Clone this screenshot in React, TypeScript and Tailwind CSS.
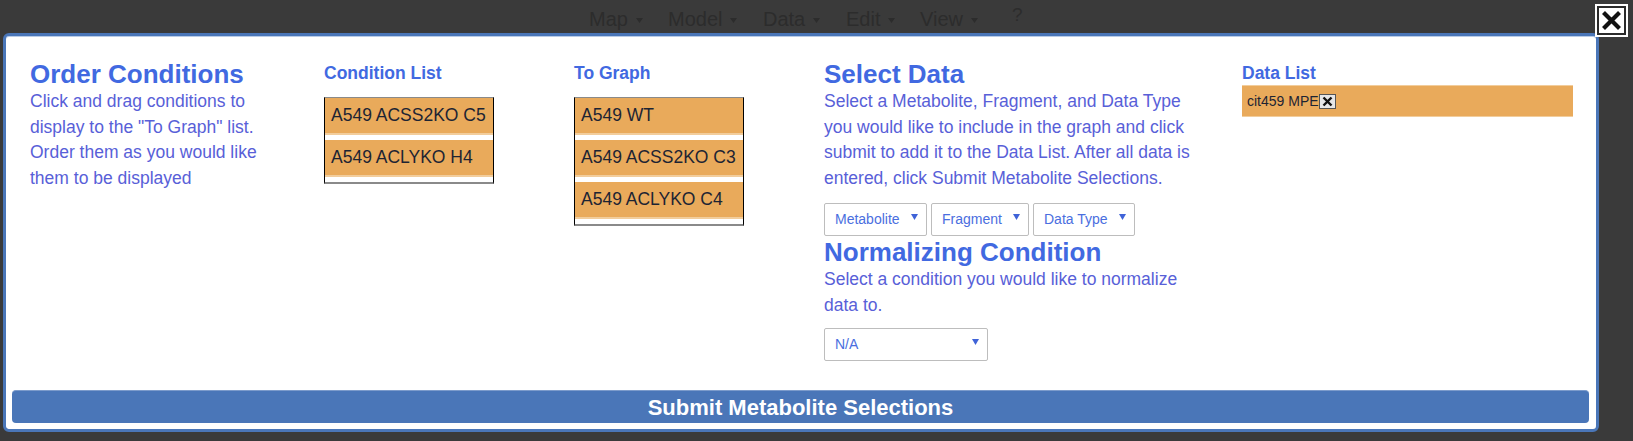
import React from 'react';

const menu = [
  { label: 'Map', width: 'w-[79px]' },
  { label: 'Model', width: 'w-[95px]' },
  { label: 'Data', width: 'w-[83px]' },
  { label: 'Edit', width: 'w-[74px]' },
  { label: 'View', width: 'w-[92px]' },
];

function Caret({ color = '#2c2c2c', w = 7, h = 5 }: { color?: string; w?: number; h?: number }) {
  return (
    <svg width={w} height={h} viewBox={`0 0 ${w} ${h}`} className="inline-block">
      <path d={`M0 0 L${w} 0 L${w / 2} ${h} Z`} fill={color} />
    </svg>
  );
}

function ListItem({ text }: { text: string }) {
  return (
    <div className="h-[37px] mb-[5px] bg-[#e9aa5b] border-b-2 border-[#f2cd9c] pl-[6px] flex items-center text-[17.5px] text-[#1d2433]">
      {text}
    </div>
  );
}

function ConditionBox({ items }: { items: string[] }) {
  return (
    <div className="w-[170px] border-x border-x-black border-t border-t-[#8a8a8a] border-b-2 border-b-[#8a8a8a] bg-white">
      {items.map((t) => (
        <ListItem key={t} text={t} />
      ))}
    </div>
  );
}

function Dropdown({ label, width }: { label: string; width: string }) {
  return (
    <div
      className={`${width} h-[33px] border border-[#bdbdbd] rounded-[2px] bg-white flex items-center justify-between pl-[10px] pr-[8px] text-[14px] text-[#4a6ee0]`}
    >
      <span>{label}</span>
      <span className="-mt-[5px] flex">
        <Caret color="#3f63d8" w={7} h={6} />
      </span>
    </div>
  );
}

function SmallX() {
  return (
    <span className="inline-flex w-[17px] h-[15px] border border-[#555] bg-[#e6e6e6] items-center justify-center">
      <svg width="11" height="11" viewBox="0 0 11 11">
        <path d="M1.5 1.5 L9.5 9.5 M9.5 1.5 L1.5 9.5" stroke="#111" strokeWidth="2.4" />
      </svg>
    </span>
  );
}

const bodyText = 'text-[17.5px] leading-[25.7px] text-[#5860d8] whitespace-nowrap';
const title = 'text-[26px] leading-[30px] font-bold text-[#4169e1] whitespace-nowrap';
const heading = 'text-[17.5px] leading-[20px] font-bold text-[#4169e1]';

export default function App() {
  return (
    <div className="relative w-[1633px] h-[441px] overflow-hidden bg-[#3a3a3a] font-['Liberation_Sans',Arial,sans-serif]">
      {/* Navbar behind the overlay */}
      <nav className="h-[33px] flex items-start pt-[7px] pl-[589px] text-[20px] leading-[24px] text-[#2c2c2c]">
        {menu.map((m) => (
          <span key={m.label} className={`${m.width} flex items-center gap-[8px]`}>
            {m.label}
            <span className="mt-[3px] flex">
              <Caret />
            </span>
          </span>
        ))}
        <span className="-mt-[4px] text-[19px]">?</span>
      </nav>

      {/* Modal */}
      <div className="ml-[3px] w-[1596px] h-[399px] border-[3px] border-[#4a76b8] rounded-[6px] bg-white flex flex-col shadow-[inset_0_1px_0_#b9cbe6]">
        <div className="flex pt-[23px] pl-[24px]">
          {/* Order Conditions */}
          <div className="w-[294px]">
            <h2 className={title}>Order Conditions</h2>
            <p className={bodyText}>
              Click and drag conditions to
              <br />
              display to the "To Graph" list.
              <br />
              Order them as you would like
              <br />
              them to be displayed
            </p>
          </div>

          {/* Condition List */}
          <div className="w-[250px] pt-[4px]">
            <h4 className={heading}>Condition List</h4>
            <div className="mt-[14px]">
              <ConditionBox items={['A549 ACSS2KO C5', 'A549 ACLYKO H4']} />
            </div>
          </div>

          {/* To Graph */}
          <div className="w-[250px] pt-[4px]">
            <h4 className={heading}>To Graph</h4>
            <div className="mt-[14px]">
              <ConditionBox items={['A549 WT', 'A549 ACSS2KO C3', 'A549 ACLYKO C4']} />
            </div>
          </div>

          {/* Select Data */}
          <div className="w-[418px]">
            <h2 className={title}>Select Data</h2>
            <p className={bodyText}>
              Select a Metabolite, Fragment, and Data Type
              <br />
              you would like to include in the graph and click
              <br />
              submit to add it to the Data List. After all data is
              <br />
              entered, click Submit Metabolite Selections.
            </p>
            <div className="flex gap-[4px] mt-[11px]">
              <Dropdown label="Metabolite" width="w-[103px]" />
              <Dropdown label="Fragment" width="w-[98px]" />
              <Dropdown label="Data Type" width="w-[102px]" />
            </div>
            <h2 className={`${title} mt-[1px]`}>Normalizing Condition</h2>
            <p className={bodyText}>
              Select a condition you would like to normalize
              <br />
              data to.
            </p>
            <div className="mt-[10px]">
              <Dropdown label="N/A" width="w-[164px]" />
            </div>
          </div>

          {/* Data List */}
          <div className="w-[331px] pt-[4px]">
            <h4 className={heading}>Data List</h4>
            <div className="mt-[2px] h-[32px] bg-[#e9aa5b] border-y border-[#f2cd9c] pl-[5px] flex items-center text-[14px] text-[#1d2433]">
              cit459 MPE
              <SmallX />
            </div>
          </div>
        </div>

        <button className="mt-auto mb-[6px] ml-[6px] mr-[7px] h-[33px] rounded-[4px] bg-[#4a76b8] border-t border-[#7c9bcb] text-white text-[22px] font-bold">
          Submit Metabolite Selections
        </button>
      </div>

      {/* Close button */}
      <div className="absolute left-[1595px] top-[4px] w-[33px] h-[33px] border-2 border-white bg-[#2b2b2b] p-[2px]">
        <div className="w-full h-full bg-white flex items-center justify-center">
          <svg width="21" height="21" viewBox="0 0 21 21">
            <path d="M2.5 2.5 L18.5 18.5 M18.5 2.5 L2.5 18.5" stroke="#111" strokeWidth="4.2" />
          </svg>
        </div>
      </div>
    </div>
  );
}
